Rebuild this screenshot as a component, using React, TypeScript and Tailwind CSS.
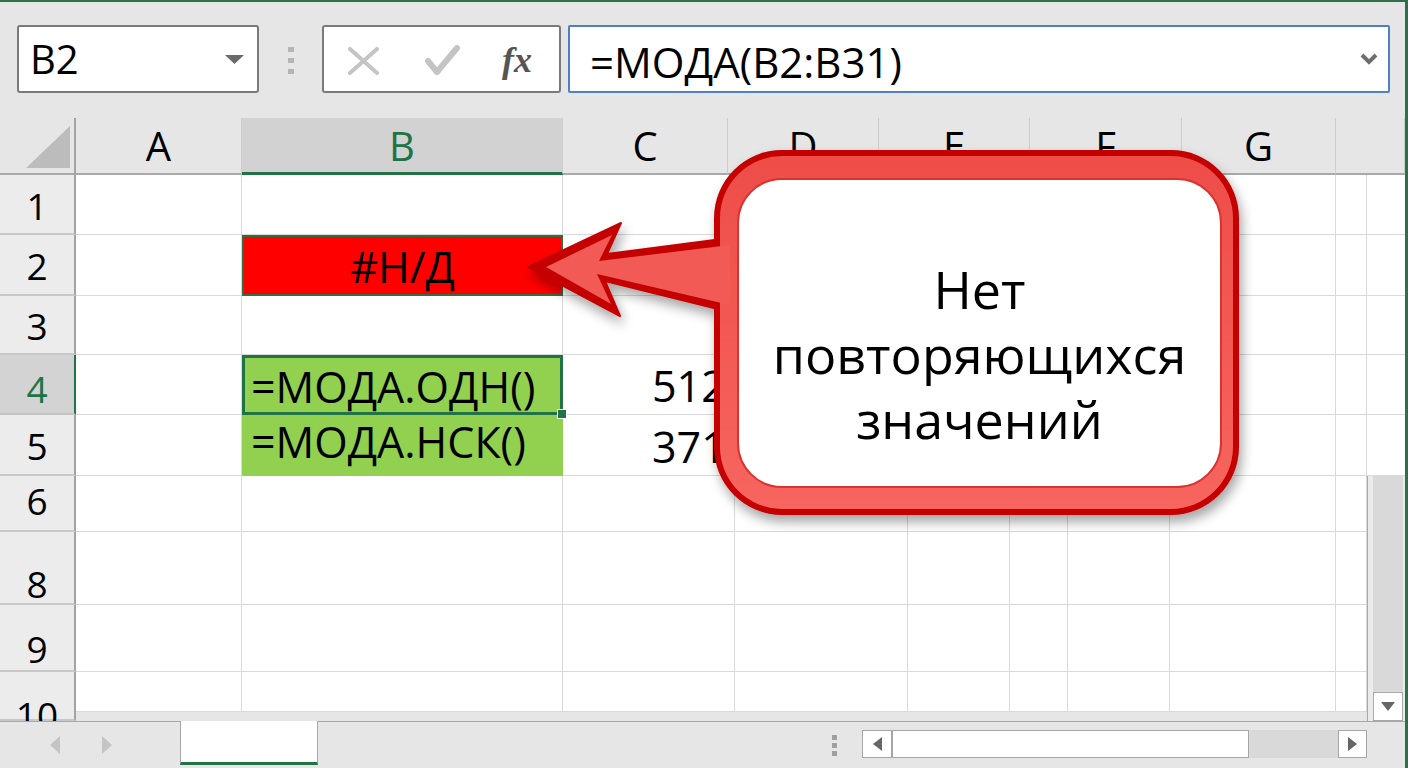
import React from "react";

const hdrCols = [
  { l: "A", w: "w-[166px]" },
  { l: "B", w: "w-[321px]", sel: true },
  { l: "C", w: "w-[165px]" },
  { l: "D", w: "w-[151px]" },
  { l: "E", w: "w-[151px]" },
  { l: "F", w: "w-[152px]" },
  { l: "G", w: "w-[154px]" },
  { l: "", w: "w-[69px]" },
];

const bodyCols = [
  "w-[166px]",
  "w-[321px]",
  "w-[172px]",
  "w-[173px]",
  "w-[102px]",
  "w-[58px]",
  "w-[102px]",
  "w-[166px]",
  "w-[31px]",
];

type RowDef = { n: string; h: string; pt: string; cellH?: string; sel?: boolean };

const rows: RowDef[] = [
  { n: "1", h: "h-[60px]", pt: "pt-[12px]" },
  { n: "2", h: "h-[61px]", pt: "pt-[12px]" },
  { n: "3", h: "h-[59px]", pt: "pt-[11px]" },
  { n: "4", h: "h-[60px]", pt: "pt-[15px]", sel: true },
  { n: "5", h: "h-[61px]", pt: "pt-[12px]" },
  { n: "6", h: "h-[56px]", pt: "pt-[6px]" },
  { n: "8", h: "h-[73px]", pt: "pt-[33px]" },
  { n: "9", h: "h-[67px]", pt: "pt-[25px]" },
  { n: "10", h: "h-[49px]", pt: "pt-[24px]", cellH: "h-[40px]" },
];

const rightCells = ["h-[60px]", "h-[61px]", "h-[59px]", "h-[60px]", "h-[61px]"];

function Cell({ row, col }: { row: RowDef; col: number }) {
  const w = bodyCols[col];
  const h = row.cellH ?? "self-stretch";
  const base = `${w} ${h} shrink-0 leading-none text-[43px] text-black whitespace-nowrap`;

  if (col === 1 && row.n === "2") {
    return (
      <div className={`${base} bg-[#ff0000] border-2 border-[#356b41] flex justify-center pt-[8px]`}>
        #Н/Д
      </div>
    );
  }
  if (col === 1 && row.n === "4") {
    return (
      <div className={`${base} relative bg-[#92d050] border-[3px] border-[#217346] pl-[6px] pt-[7px]`}>
        =МОДА.ОДН()
        <span className="absolute right-[-7px] bottom-[-7px] w-[10px] h-[10px] bg-[#217346] border border-white z-10" />
      </div>
    );
  }
  if (col === 1 && row.n === "5") {
    return (
      <div className={`${base} bg-[#92d050] pl-[9px] pt-[5px]`}>=МОДА.НСК()</div>
    );
  }
  if (col === 2 && (row.n === "4" || row.n === "5")) {
    return (
      <div className={`${base} bg-white border-r border-b border-[#d9d9d9] pl-[89px] ${row.n === "4" ? "pt-[9px]" : "pt-[10px]"}`}>
        {row.n === "4" ? "512" : "371"}
      </div>
    );
  }
  return <div className={`${base} bg-white border-r border-b border-[#d9d9d9]`} />;
}

function Row({ row }: { row: RowDef }) {
  return (
    <div className={`flex items-start ${row.h}`}>
      <div
        className={`w-[76px] self-stretch shrink-0 flex justify-center border-r-2 border-b-2 text-[37px] leading-none ${row.pt} ${
          row.sel
            ? "bg-[#d3d3d3] text-[#217346] border-r-[#217346] border-b-[#c4c4c4]"
            : "bg-[#ececec] text-black border-r-[#a3a3a3] border-b-[#c8c8c8]"
        }`}
      >
        {row.n}
      </div>
      {bodyCols.map((_, i) => (
        <Cell key={i} row={row} col={i} />
      ))}
    </div>
  );
}

function Callout() {
  return (
    <>
      <svg
        className="absolute left-0 top-0 pointer-events-none"
        width="1408"
        height="768"
        viewBox="0 0 1408 768"
      >
        <defs>
          <filter id="sh" x="-20%" y="-20%" width="140%" height="140%">
            <feDropShadow dx="3" dy="7" stdDeviation="6" floodColor="#000" floodOpacity="0.35" />
          </filter>
          <linearGradient id="band" x1="0" y1="0" x2="0" y2="1">
            <stop offset="0" stopColor="#ee4d48" />
            <stop offset="1" stopColor="#f7655f" />
          </linearGradient>
        </defs>
        <g filter="url(#sh)">
          <rect x="714" y="148" width="525" height="365" rx="68" fill="#c40000" />
          <polygon
            points="528,265 621,221 607,252 730,236 730,310 605,279 620,314"
            fill="#c40000"
            stroke="#c40000"
            strokeWidth="2"
            strokeLinejoin="round"
          />
        </g>
        <rect x="720" y="154" width="513" height="353" rx="62" fill="url(#band)" />
        <polygon
          points="546,265 612,233 599,259 730,243 730,303 597,272 611,302"
          fill="#f15a55"
        />
        <rect x="738" y="177" width="483" height="308" rx="44" fill="#ffffff" stroke="#d9332f" strokeWidth="2" />
      </svg>
      <div className="absolute left-[738px] top-[177px] w-[483px] h-[308px] flex flex-col items-center pt-[77px] text-[52px] leading-[65px] text-black whitespace-nowrap">
        <span>Нет</span>
        <span>повторяющихся</span>
        <span>значений</span>
      </div>
    </>
  );
}

export default function App() {
  return (
    <div className="relative w-[1408px] h-[768px] overflow-hidden bg-[#e6e6e6] border-t-2 border-r-[3px] border-[#2f6f49] font-['Open_Sans','Noto_Sans',sans-serif]">
      {/* toolbar */}
      <div className="h-[116px] flex items-start pt-[23px] pl-[17px]">
        <div className="w-[242px] h-[68px] bg-white border-2 border-[#7a7a7a] rounded-[3px] flex justify-between">
          <span className="text-[40px] leading-none pl-[11px] pt-[12px] text-black">B2</span>
          <svg className="mt-[28px] mr-[13px]" width="19" height="9" viewBox="0 0 19 9">
            <path d="M0 0 H19 L9.5 9 Z" fill="#6b6b6b" />
          </svg>
        </div>
        <div className="ml-[29px] mt-[22px] flex flex-col gap-[6px]">
          <span className="w-[6px] h-[5px] bg-[#b5b5b5]" />
          <span className="w-[6px] h-[5px] bg-[#b5b5b5]" />
          <span className="w-[6px] h-[5px] bg-[#b5b5b5]" />
        </div>
        <div className="ml-[28px] w-[239px] h-[68px] bg-white border-2 border-[#7a7a7a] rounded-[3px] flex items-start">
          <svg className="ml-[23px] mt-[20px]" width="33" height="28" viewBox="0 0 33 28">
            <path d="M3 2 L30 26 M30 2 L3 26" stroke="#c4c4c4" strokeWidth="4" strokeLinecap="round" />
          </svg>
          <svg className="ml-[45px] mt-[18px]" width="35" height="30" viewBox="0 0 35 30">
            <path d="M3 16 L12 27 L32 3" stroke="#c4c4c4" strokeWidth="6" fill="none" strokeLinecap="round" strokeLinejoin="round" />
          </svg>
          <span className="ml-[42px] mt-[15px] text-[36px] leading-none italic font-semibold text-[#555] font-['Liberation_Serif',serif]">
            fx
          </span>
        </div>
        <div className="ml-[7px] w-[822px] h-[68px] bg-white border-2 border-[#4f7fc6] rounded-[2px] flex justify-between">
          <span className="text-[42px] leading-none pl-[20px] pt-[14px] text-black">=МОДА(B2:B31)</span>
          <svg className="mt-[26px] mr-[10px]" width="18" height="12" viewBox="0 0 18 12">
            <polyline points="2,2 9,9 16,2" stroke="#6e6e6e" strokeWidth="4" fill="none" />
          </svg>
        </div>
      </div>

      {/* column headers */}
      <div className="h-[57px] flex">
        <div className="w-[76px] shrink-0 border-r-2 border-r-[#a3a3a3] border-b-2 border-b-[#a9a9a9] pl-[26px] pt-[8px]">
          <svg width="44" height="42" viewBox="0 0 44 42">
            <polygon points="44,0 44,42 0,42" fill="#bcbcbc" />
          </svg>
        </div>
        {hdrCols.map((c) => (
          <div
            key={c.l || "h"}
            className={`${c.w} shrink-0 flex justify-center pt-[8px] text-[40px] leading-none border-r border-r-[#cdcdcd] ${
              c.sel
                ? "bg-[#d2d2d2] text-[#217346] border-b-[3px] border-b-[#217346]"
                : "text-black border-b-2 border-b-[#a9a9a9]"
            }`}
          >
            {c.l}
          </div>
        ))}
      </div>

      {/* grid body */}
      <div className="h-[546px] flex overflow-hidden">
        <div className="w-[1367px] shrink-0 flex flex-col">
          {rows.map((r) => (
            <Row key={r.n} row={r} />
          ))}
        </div>
        <div className="w-[38px] shrink-0 flex flex-col">
          {rightCells.map((h, i) => (
            <div key={i} className={`${h} bg-white border-b border-[#d9d9d9]`} />
          ))}
          <div className="flex-1 bg-[#ebebeb] border-l border-[#a8a8a8] pl-[5px] flex">
            <div className="w-[30px] bg-[#d9d9d9] flex flex-col justify-end">
              <div className="h-[29px] bg-white border border-[#a9a9a9] flex items-center justify-center">
                <svg width="14" height="9" viewBox="0 0 14 9">
                  <path d="M0 0 H14 L7 9 Z" fill="#666" />
                </svg>
              </div>
            </div>
          </div>
        </div>
      </div>

      {/* sheet tabs and horizontal scroll */}
      <div className="h-[47px] flex items-start border-t border-[#a8a8a8]">
        <div className="w-[180px] shrink-0 flex items-center pl-[50px] pt-[14px] gap-[42px]">
          <svg width="10" height="18" viewBox="0 0 10 18">
            <path d="M10 0 V18 L0 9 Z" fill="#c4c4c4" />
          </svg>
          <svg width="10" height="18" viewBox="0 0 10 18">
            <path d="M0 0 V18 L10 9 Z" fill="#c4c4c4" />
          </svg>
        </div>
        <div className="w-[138px] h-[44px] -mt-px shrink-0 bg-white border-l border-r border-[#a8a8a8] border-b-[3px] border-b-[#217346]" />
        <div className="ml-[514px] mt-[13px] flex flex-col gap-[3px]">
          <span className="w-[5px] h-[5px] bg-[#a0a0a0]" />
          <span className="w-[5px] h-[5px] bg-[#a0a0a0]" />
          <span className="w-[5px] h-[5px] bg-[#a0a0a0]" />
        </div>
        <div className="ml-[25px] mt-[8px] flex h-[28px]">
          <div className="w-[30px] bg-white border border-[#a6a6a6] flex items-center justify-center">
            <svg width="9" height="14" viewBox="0 0 9 14">
              <path d="M9 0 V14 L0 7 Z" fill="#666" />
            </svg>
          </div>
          <div className="w-[357px] bg-white border border-[#a6a6a6]" />
          <div className="w-[89px] bg-[#d9d9d9]" />
          <div className="w-[29px] bg-white border border-[#a6a6a6] flex items-center justify-center">
            <svg width="9" height="14" viewBox="0 0 9 14">
              <path d="M0 0 V14 L9 7 Z" fill="#666" />
            </svg>
          </div>
        </div>
      </div>

      <Callout />
    </div>
  );
}
